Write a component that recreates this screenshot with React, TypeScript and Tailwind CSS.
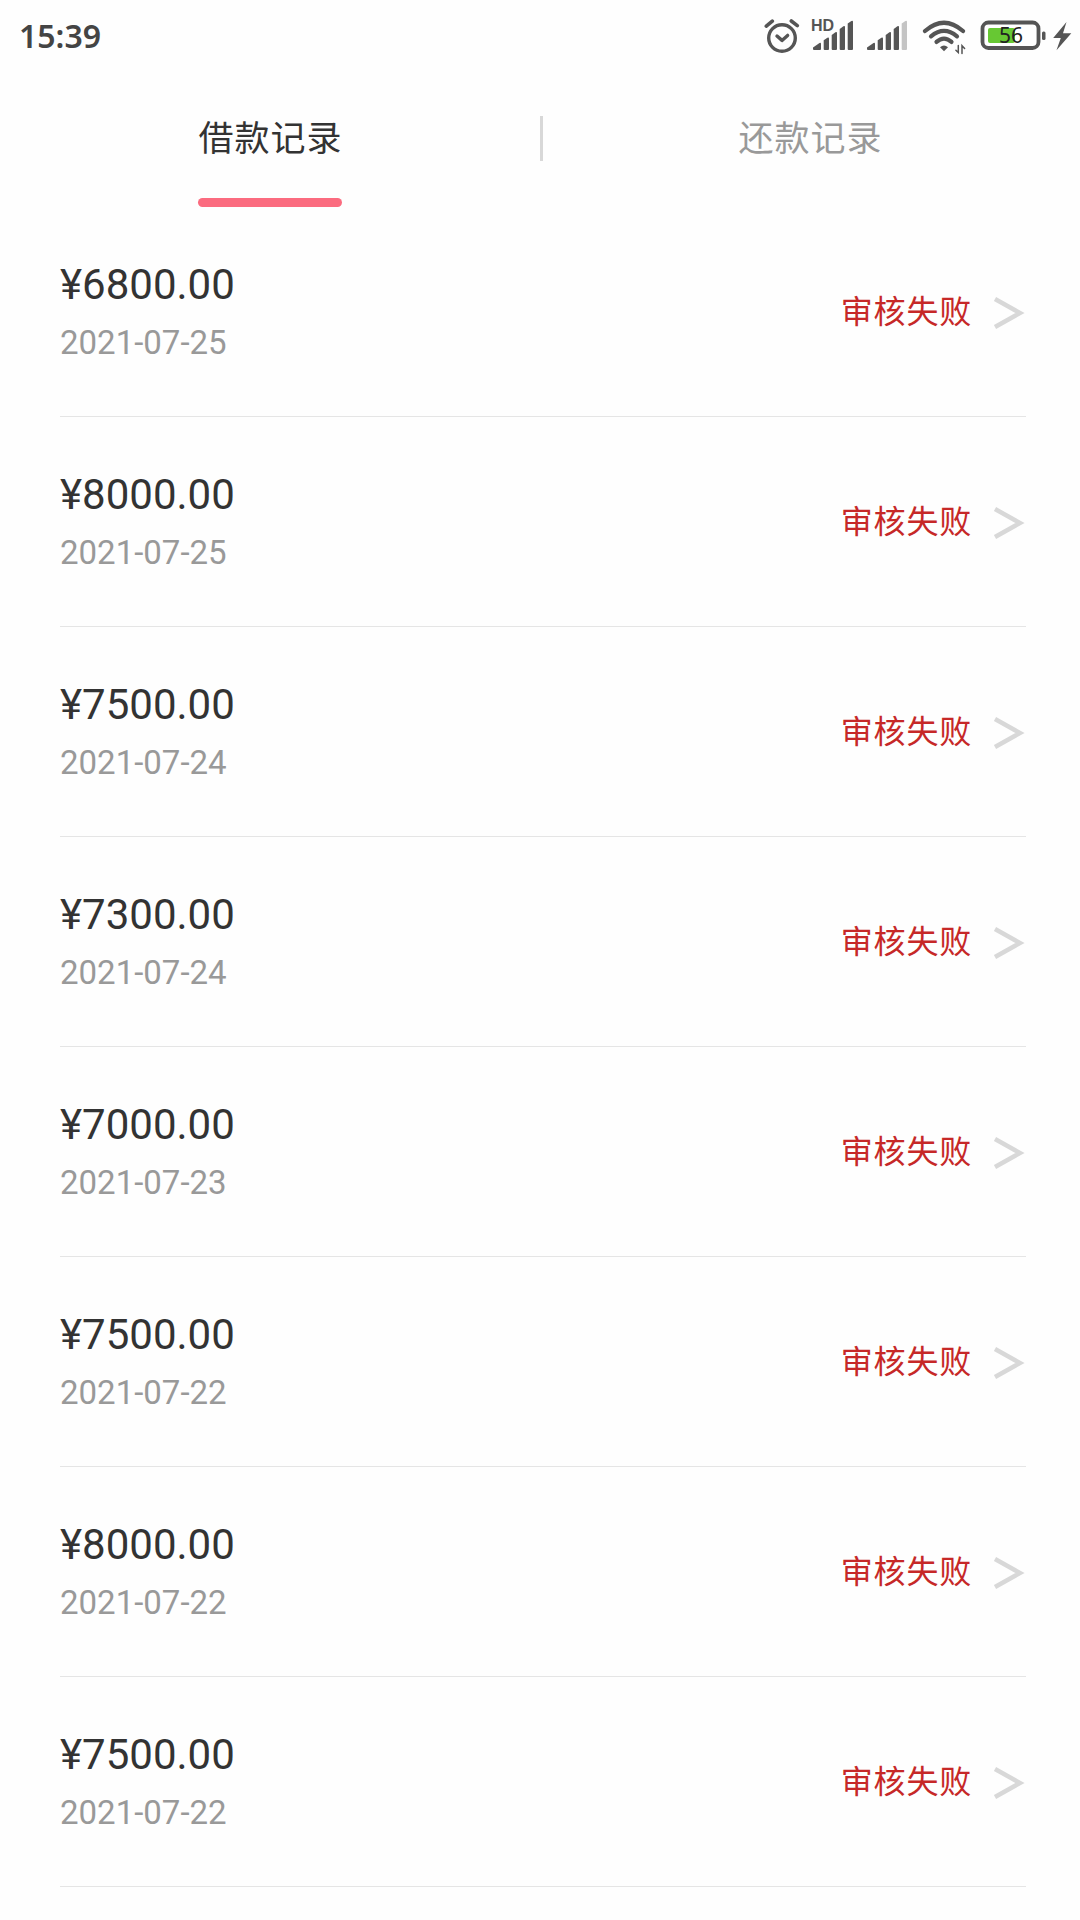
import { useState } from 'react';

const records = [
  { id: 1, amount: '6800.00', date: '2021-07-25' },
  { id: 2, amount: '8000.00', date: '2021-07-25' },
  { id: 3, amount: '7500.00', date: '2021-07-24' },
  { id: 4, amount: '7300.00', date: '2021-07-24' },
  { id: 5, amount: '7000.00', date: '2021-07-23' },
  { id: 6, amount: '7500.00', date: '2021-07-22' },
  { id: 7, amount: '8000.00', date: '2021-07-22' },
  { id: 8, amount: '7500.00', date: '2021-07-22' },
];

const tabs = ['借款记录', '还款记录'];

function AlarmIcon() {
  return (
    <svg className="w-9 h-9" viewBox="764 18 36 36" fill="none" stroke="#555" strokeWidth="3.4" strokeLinecap="round" strokeLinejoin="round">
      <circle cx="782" cy="38" r="13.3" />
      <path d="M777 36l5 4.4 5.6-5" />
      <path d="M766.3 26.2l6-5M797.3 25.6l-6-4.6" strokeWidth="3.6" />
    </svg>
  );
}

// The last bar is dimmed when the signal is not full
function SignalIcon({ full }: { full?: boolean }) {
  return (
    <svg className="w-10 h-[30px]" viewBox="0 0 40 30" fill="#555">
      <path d="M0 29v-1.500l6.500-4.600q1.500-.8 1.500.8V29q0 1-1 1H1q-1 0-1-1z" />
      <path d="M10.700 20.200l3.700-2.400q1.600-1 1.600.8V29q0 1-1 1h-3.300q-1 0-1-1z" />
      <path d="M18.700 14.900l3.700-2.600q1.600-1 1.600.8V29q0 1-1 1h-3.300q-1 0-1-1z" />
      <path d="M26.700 8.900l3.700-2.600q1.600-1 1.600.8V29q0 1-1 1h-3.300q-1 0-1-1z" />
      <path d="M34.700 3.600l3.700-2.600q1.600-1 1.600.8V29q0 1-1 1h-3.300q-1 0-1-1z" fill={full ? '#555' : '#c4c4c4'} />
    </svg>
  );
}

function WifiIcon() {
  return (
    <svg className="w-11 h-9" viewBox="922 19 44 36" fill="none" stroke="#555" strokeWidth="4.2" strokeLinecap="round">
      <path d="M925 31q19-16.500 38 0" />
      <path d="M931 36.300q13-10.800 26 0" />
      <path d="M936.500 41.900q7.500-6.500 15 0" />
      <path d="M940 47.300q4-3.600 8 0l-4 4z" fill="#555" stroke="none" />
      <path d="M958.300 45.500v7l-2.400-2.300M962 53.500v-7.800l2.600 2.800" strokeWidth="1.500" />
    </svg>
  );
}

function BatteryIcon() {
  return (
    <div className="relative w-[66px] h-[30px]">
      <svg className="w-full h-full" viewBox="980 20 66 30">
        <rect x="982.500" y="22.500" width="56" height="25.500" rx="6" fill="#fff" stroke="#555" strokeWidth="3.800" />
        <rect x="988" y="28" width="27" height="15" rx="2" fill="#67c833" />
        <rect x="1042" y="31.500" width="3.500" height="8.500" rx="1.500" fill="#555" />
      </svg>
      <span className="absolute left-[19px] top-[1px] font-['Noto_Sans',sans-serif] text-[21px] leading-[28px] text-[#222]">56</span>
    </div>
  );
}

function StatusBar() {
  return (
    <header className="flex h-[72px] items-start justify-between pl-[19px] pr-2 text-[#444]">
      <span className="mt-4 font-['Noto_Sans',sans-serif] text-[32px] font-semibold leading-10">15:39</span>
      <div className="flex items-start">
        <div className="mt-[18px]"><AlarmIcon /></div>
        <div className="relative ml-[13px] mt-5">
          <SignalIcon full />
          <span className="absolute -left-[2px] -top-[2px] font-['Liberation_Sans',sans-serif] text-[16px] font-bold leading-4 text-[#555]">HD</span>
        </div>
        <div className="ml-[14px] mt-5"><SignalIcon /></div>
        <div className="ml-[15px] mt-[19px]"><WifiIcon /></div>
        <div className="ml-[14px] mt-5"><BatteryIcon /></div>
        <svg className="ml-[7px] mt-[21px] h-[30px] w-[19px]" viewBox="1053 21 19 30" fill="#555">
          <path d="M1066.500 22l-13.300 16h7.600l-4.300 12.300 14.800-17h-8.300z" />
        </svg>
      </div>
    </header>
  );
}

export default function App() {
  const [active, setActive] = useState(0);

  return (
    <div className="h-[1920px] w-[1080px] overflow-hidden bg-[#fefefe] font-['Roboto','Noto_Sans_CJK_SC',sans-serif]">
      <StatusBar />

      {/* Tabs */}
      <nav className="relative grid h-[135px] grid-cols-2">
        {tabs.map((tab, i) => (
          <button key={tab} onClick={() => setActive(i)} className="flex flex-col items-center justify-between pt-[43px]">
            <span className={`pl-px text-[35px] leading-[50px] tracking-[1px] ${active === i ? 'text-[#333]' : 'text-[#999]'}`}>{tab}</span>
            {active === i && <span className="h-[9px] w-36 rounded-full bg-[#fb6b7f]" />}
          </button>
        ))}
        <span className="absolute left-[540px] top-11 h-[45px] w-[3px] bg-[#d8d8d8]" />
      </nav>

      {/* Records */}
      <ul className="pl-[60px] pr-[54px]">
        {records.map((record) => (
          <li key={record.id} className="flex h-[210px] items-start justify-between border-b border-[#e5e5e5]">
            <div className="pt-[53px]">
              <p className="text-[42px] leading-[50px] text-[#333]">¥{record.amount}</p>
              <p className="mt-[13px] text-[33px] leading-10 text-[#999]">{record.date}</p>
            </div>
            <div className="flex items-start pr-px pt-20">
              <span className="text-[32px] leading-[50px] tracking-[0.8px] text-[#c62828]">审核失败</span>
              <svg className="ml-[21px] mt-[10px] h-8 w-8" viewBox="0 0 32 32" fill="none" stroke="#d8d8d8" strokeWidth="4.5">
                <path d="M2 2l25 14L2 30" />
              </svg>
            </div>
          </li>
        ))}
      </ul>
    </div>
  );
}
